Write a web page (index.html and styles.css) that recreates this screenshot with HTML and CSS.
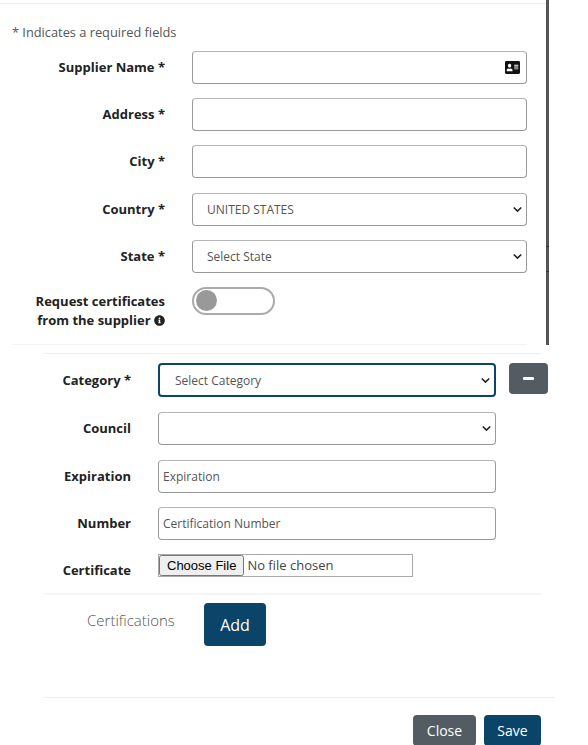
FILE: index.html
```html
<!DOCTYPE html>
<html>

<head>
     <title>Add Supplier</title>
     <link rel="stylesheet" href="styles.css">
</head>

<body>
     <div class="supplier-panel">
          <form class="supplier-form">
               <p class="required-note">* Indicates a required fields</p>

               <div class="row">
                    <label class="row-label">Supplier Name *</label>
                    <div class="input-wrap">
                         <input class="field" type="text">
                         <svg class="card-icon" viewBox="0 32 576 448" preserveAspectRatio="none">
                              <path d="M528 32H48C21.5 32 0 53.5 0 80v352c0 26.5 21.5 48 48 48h480c26.5 0 48-21.5 48-48V80c0-26.5-21.5-48-48-48zm-352 96c35.3 0 64 28.7 64 64s-28.7 64-64 64-64-28.7-64-64 28.7-64 64-64zm112 236.8c0 10.6-10 19.2-22.4 19.2H86.4C74 384 64 375.4 64 364.8v-19.2c0-31.8 30.1-57.6 67.2-57.6h5c12.3 5.1 25.7 8 39.8 8s27.6-2.9 39.8-8h5c37.1 0 67.2 25.8 67.2 57.6v19.2zM512 312c0 4.4-3.6 8-8 8H360c-4.4 0-8-3.6-8-8v-16c0-4.4 3.6-8 8-8h144c4.4 0 8 3.6 8 8v16zm0-64c0 4.4-3.6 8-8 8H360c-4.4 0-8-3.6-8-8v-16c0-4.4 3.6-8 8-8h144c4.4 0 8 3.6 8 8v16zm0-64c0 4.4-3.6 8-8 8H360c-4.4 0-8-3.6-8-8v-16c0-4.4 3.6-8 8-8h144c4.4 0 8 3.6 8 8v16z"/>
                         </svg>
                    </div>
               </div>

               <div class="row">
                    <label class="row-label">Address *</label>
                    <input class="field" type="text">
               </div>

               <div class="row">
                    <label class="row-label">City *</label>
                    <input class="field" type="text">
               </div>

               <div class="row">
                    <label class="row-label">Country *</label>
                    <select class="field select">
                         <option>UNITED STATES</option>
                    </select>
               </div>

               <div class="row">
                    <label class="row-label">State *</label>
                    <select class="field select">
                         <option>Select State</option>
                    </select>
               </div>

               <div class="row toggle-row">
                    <label class="row-label">Request certificates<br>from the supplier
                         <svg class="info-icon" viewBox="0 0 512 512">
                              <path d="M256 8C119.043 8 8 119.083 8 256c0 136.997 111.043 248 248 248s248-111.003 248-248C504 119.083 392.957 8 256 8zm0 110c23.196 0 42 18.804 42 42s-18.804 42-42 42-42-18.804-42-42 18.804-42 42-42zm56 254c0 6.627-5.373 12-12 12h-88c-6.627 0-12-5.373-12-12v-24c0-6.627 5.373-12 12-12h12v-64h-12c-6.627 0-12-5.373-12-12v-24c0-6.627 5.373-12 12-12h64c6.627 0 12 5.373 12 12v100h12c6.627 0 12 5.373 12 12v24z"/>
                         </svg>
                    </label>
                    <div class="toggle"><span class="knob"></span></div>
               </div>
          </form>
          <div class="panel-edge"></div>
     </div>

     <div class="panel-rule"></div>

     <form class="cert-form">
          <div class="cert-row-wrap">
               <div class="row cert-row">
                    <label class="row-label">Category *</label>
                    <select class="field select focused">
                         <option>Select Category</option>
                    </select>
                    <button class="button remove" type="button"><span class="minus"></span></button>
               </div>

               <div class="row cert-row">
                    <label class="row-label">Council</label>
                    <select class="field select"></select>
               </div>

               <div class="row cert-row">
                    <label class="row-label">Expiration</label>
                    <input class="field tight" type="text" placeholder="Expiration">
               </div>

               <div class="row cert-row">
                    <label class="row-label">Number</label>
                    <input class="field tight" type="text" placeholder="Certification Number">
               </div>

               <div class="row cert-row file-row">
                    <label class="row-label">Certificate</label>
                    <input class="file" type="file">
               </div>
          </div>

          <div class="add-row">
               <span class="add-label">Certifications</span>
               <button class="button add" type="button">Add</button>
          </div>
     </form>

     <div class="footer">
          <button class="button close" type="button">Close</button>
          <button class="button save" type="button">Save</button>
     </div>
</body>

</html>
```

FILE: styles.css
```css
html,
body {
     height: 745px;
     overflow: hidden;
}

body {
     margin: 0;
     font-family: "Open Sans", Arial, sans-serif;
     font-size: 12px;
     color: #212529;
     background-color: #fff;
}

.supplier-panel {
     display: flex;
     width: 549px;
     height: 345px;
}

.supplier-form {
     display: flex;
     flex-direction: column;
     flex: 1;
     padding-top: 3px;
}

.supplier-form::before {
     content: "";
     display: block;
     height: 1px;
     background-color: #eee;
}

.supplier-form::after {
     content: "";
     display: block;
     height: 1px;
     margin: auto 19px 0 12px;
     background-color: #f3f3f3;
}

.panel-edge {
     width: 3px;
     background: linear-gradient(#555 246px, #333 246px, #333 247px, #555 247px, #555 271px, #333 271px, #333 272px, #555 272px);
}

.required-note {
     margin: 0;
     padding: 20px 0 10px 12px;
     font-size: 12.8px;
     line-height: 17px;
     color: #555;
}

.row {
     display: grid;
     grid-template-columns: 165px 335px;
     column-gap: 27px;
     align-items: center;
     margin-bottom: 14.2px;
}

.row-label {
     font-size: 13px;
     font-weight: 700;
     line-height: 19px;
     text-align: right;
     color: #222;
}

.field {
     box-sizing: border-box;
     width: 100%;
     height: 33px;
     padding: 0 14px;
     border: 1px solid #999;
     border-top-color: #b5b5b5;
     border-radius: 4px;
     font-family: inherit;
     font-size: 12px;
     color: #555;
     background-color: #fff;
}

.field::placeholder {
     color: #555;
}

.field.tight {
     padding: 0 4px;
}

.select {
     appearance: none;
     background-image: url("data:image/svg+xml,%3Csvg xmlns='http://www.w3.org/2000/svg' viewBox='0 0 8 6'%3E%3Cpath d='M.7 1.2 4 4.4l3.3-3.2' fill='none' stroke='%23222' stroke-width='1.4'/%3E%3C/svg%3E");
     background-repeat: no-repeat;
     background-position: right 4px center;
     background-size: 9px 7px;
}

.field.focused {
     height: 34px;
     border: 2px solid #0a4569;
     padding-left: 15px;
}

.input-wrap {
     position: relative;
}

.card-icon {
     position: absolute;
     top: 10px;
     right: 7px;
     width: 15px;
     height: 13px;
     fill: #111;
}

.info-icon {
     width: 11px;
     height: 11px;
     vertical-align: -1px;
     fill: #222;
}

.toggle-row {
     align-items: start;
     margin: 0;
}

.toggle-row .row-label {
     padding-top: 5px;
}

.toggle {
     box-sizing: border-box;
     width: 83px;
     height: 28px;
     padding: 1px 2px;
     border: 2px solid #aaa;
     border-radius: 14px;
}

.knob {
     display: block;
     width: 21px;
     height: 21px;
     border-radius: 50%;
     background-color: #999;
}

.panel-rule {
     width: 497px;
     height: 1px;
     margin: 8px 0 0 44px;
     background-color: #eee;
}

.cert-form {
     padding-top: 9px;
}

.cert-row-wrap {
     margin: 0 47px 0 44px;
     padding-bottom: 1px;
     border-bottom: 2px solid #f5f5f5;
}

.cert-row {
     grid-template-columns: 87px 338px 39px;
     column-gap: 27px;
     margin-bottom: 14.3px;
     margin-right: -10px;
}

.cert-row:first-child {
     margin-bottom: 15.3px;
}

.button {
     border: 1px solid transparent;
     border-radius: 4px;
     font-family: inherit;
     color: #fff;
     cursor: pointer;
}

.remove {
     display: flex;
     align-items: center;
     justify-content: center;
     align-self: start;
     width: 39px;
     height: 31px;
     margin-left: -14px;
     padding: 0;
     background-color: #535c62;
}

.minus {
     width: 11px;
     height: 3px;
     border-radius: 1px;
     background-color: #fff;
}

.file-row {
     align-items: start;
     margin-bottom: 12px;
}

.file-row .row-label {
     padding-top: 7px;
}

.file {
     box-sizing: border-box;
     width: 255px;
     height: 23px;
     border: 1px solid #aaa;
     font-family: "Open Sans", sans-serif;
     font-size: 13px;
     color: #444;
     background-color: #fff;
}

.file::file-selector-button {
     margin-right: 3px;
     font-family: Arial, "Liberation Sans", sans-serif;
     font-size: 13px;
}

.add-row {
     display: flex;
     align-items: flex-start;
     height: 94px;
     margin: 8px 33px 0 44px;
     padding-left: 43px;
     border-bottom: 1px solid #eee;
}

.add-label {
     width: 117px;
     margin-top: 7px;
     font-size: 15px;
     font-weight: 300;
     line-height: 20px;
     color: #555;
}

.add {
     width: 62px;
     height: 43px;
     font-size: 16px;
     background-color: #0a4569;
}

.footer {
     display: flex;
     justify-content: flex-end;
     gap: 8px;
     width: 541px;
     padding-top: 17px;
}

.close,
.save {
     height: 31px;
     font-size: 14px;
}

.close {
     width: 63px;
     background-color: #535c62;
}

.save {
     width: 57px;
     background-color: #0a4569;
}
```
